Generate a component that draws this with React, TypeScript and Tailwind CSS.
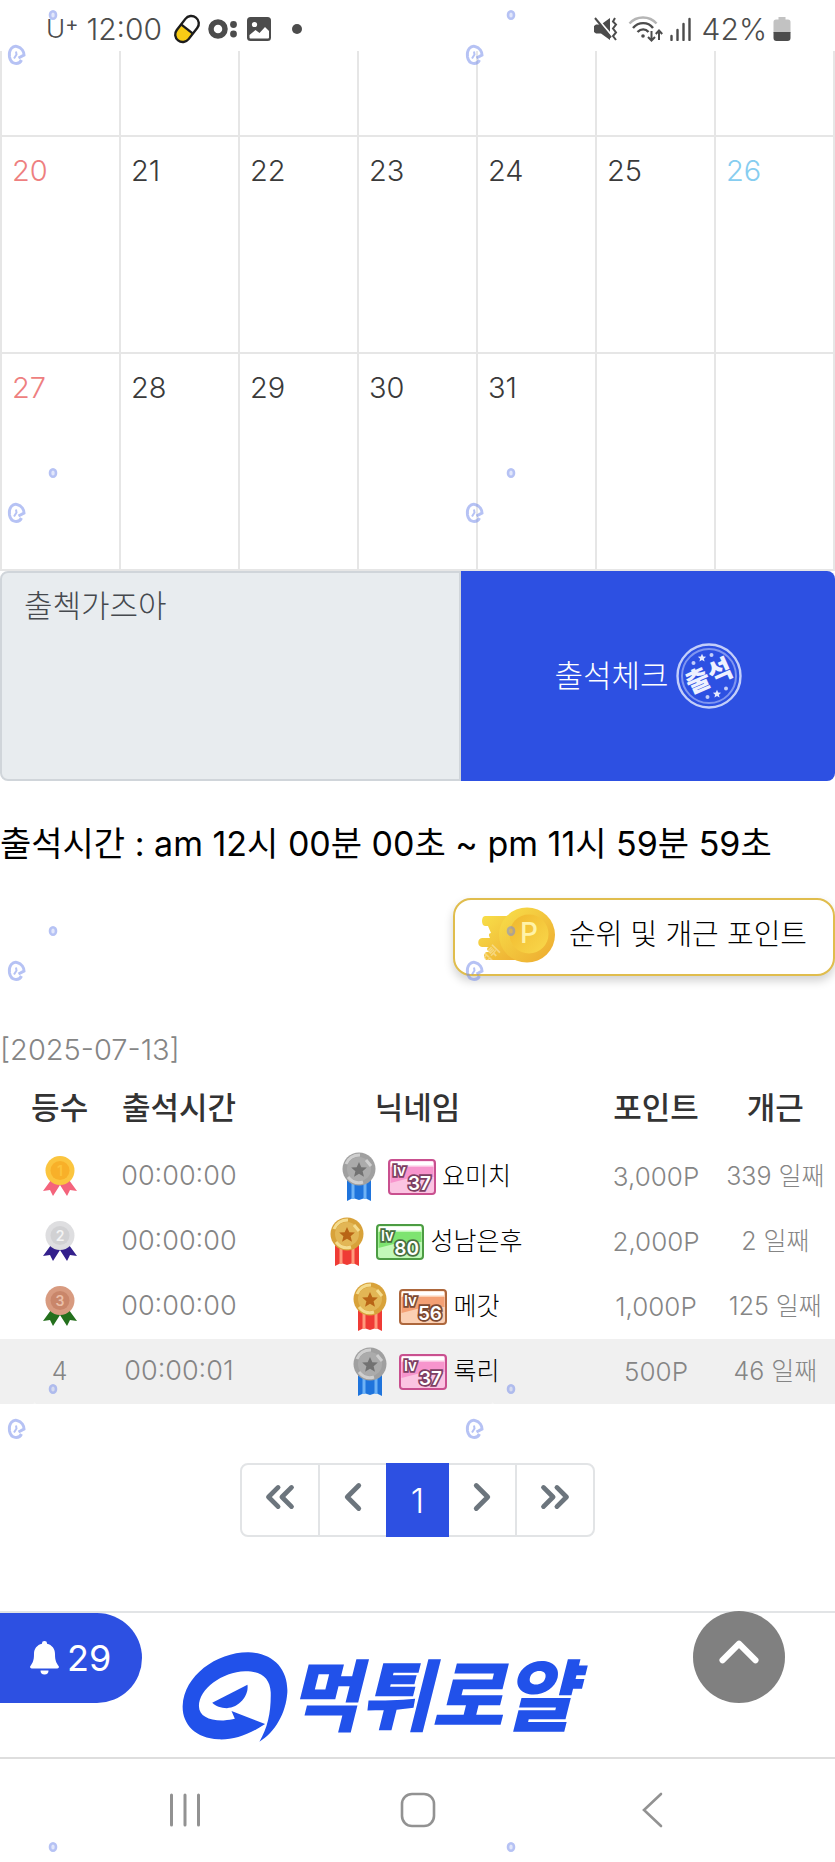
import React from "react";
import { ChevronLeft, ChevronRight, ChevronsLeft, ChevronsRight, ChevronUp } from "lucide-react";

type Tier = "gold" | "silver";
type BadgeTone = "pink" | "green" | "orange";

interface Entry {
  rank: number;
  time: string;
  tier: Tier;
  tone: BadgeTone;
  level: number;
  name: string;
  points: string;
  streak: string;
}

const entries: Entry[] = [
  { rank: 1, time: "00:00:00", tier: "silver", tone: "pink", level: 37, name: "요미치", points: "3,000P", streak: "339 일째" },
  { rank: 2, time: "00:00:00", tier: "gold", tone: "green", level: 80, name: "성남은후", points: "2,000P", streak: "2 일째" },
  { rank: 3, time: "00:00:00", tier: "gold", tone: "orange", level: 56, name: "메갓", points: "1,000P", streak: "125 일째" },
  { rank: 4, time: "00:00:01", tier: "silver", tone: "pink", level: 37, name: "록리", points: "500P", streak: "46 일째" },
];

const weeks: (number | null)[][] = [
  [20, 21, 22, 23, 24, 25, 26],
  [27, 28, 29, 30, 31, null, null],
];

const dayColors = [
  "text-[#ee7f80]",
  "text-[#3a3a3a]",
  "text-[#3a3a3a]",
  "text-[#3a3a3a]",
  "text-[#3a3a3a]",
  "text-[#3a3a3a]",
  "text-[#86cdf0]",
];

function StatusBar() {
  return (
    <header className="flex h-[51px] items-center justify-between bg-white pt-[6px] pr-[44px] pl-[46px] text-[30px] leading-none text-[#4c4c4c]">
      <div className="flex items-center">
        <span className="flex items-start">
          <span className="text-[26px] font-light">U</span>
          <span className="text-[20px] leading-[16px]">+</span>
        </span>
        <span className="ml-[8px] font-light">12:00</span>
        <svg className="ml-[10px] h-[30px] w-[30px]" viewBox="0 0 30 30" aria-hidden="true">
          <g transform="rotate(38 15 15)">
            <path d="M7.5 15V8a7.500 7.500 0 0 1 15 0v7z" fill="#fff" />
            <path d="M7.500 15v7a7.500 7.500 0 0 0 15 0v-7z" fill="#f7cb15" />
            <rect x="7.5" y="0.500" width="15" height="29" rx="7.500" fill="none" stroke="#1c1c1c" strokeWidth="2.400" />
            <path d="M7.500 15h15" stroke="#1c1c1c" strokeWidth="2.400" />
          </g>
        </svg>
        <svg className="ml-[6px] h-[24px] w-[30px]" viewBox="0 0 30 24" aria-hidden="true">
          <circle cx="10" cy="12" r="7" fill="none" stroke="#4c4c4c" strokeWidth="5.500" />
          <circle cx="25.500" cy="7.500" r="3.400" fill="#4c4c4c" />
          <circle cx="25.500" cy="17" r="3.400" fill="#4c4c4c" />
        </svg>
        <svg className="ml-[9px] h-[24px] w-[24px]" viewBox="0 0 24 24" aria-hidden="true">
          <rect width="24" height="24" rx="3.500" fill="#4c4c4c" />
          <circle cx="7.500" cy="7.500" r="2.600" fill="#fff" />
          <path d="M2.500 18l6-5 4 3 5.500-6 4 4v6.500a1 1 0 0 1-1 1H3.500a1 1 0 0 1-1-1z" fill="#fff" />
        </svg>
        <span className="ml-[21px] h-[10px] w-[10px] rounded-full bg-[#4c4c4c]" />
      </div>
      <div className="flex items-center">
        <svg className="h-[24px] w-[24px]" viewBox="0 0 24 24" aria-hidden="true">
          <path d="M0 9l2-1.500h5L16 1v22l-9-6.500H2L0 15z" fill="#4c4c4c" />
          <path d="M2 0l17 20" stroke="#fff" strokeWidth="2" />
          <path d="M1 1l16 19.500" stroke="#4c4c4c" strokeWidth="2" />
          <path d="M21 1l-2 3.500 3 3-3 4 3 4-3 3.500 3 4" fill="none" stroke="#4c4c4c" strokeWidth="2" />
        </svg>
        <svg className="ml-[10px] h-[26px] w-[35px]" viewBox="0 0 35 26" aria-hidden="true">
          <path d="M1.500 7.500c7-8 20-8 27 0" fill="none" stroke="#b5b5b5" strokeWidth="2.400" />
          <path d="M5 12c5.500-6.500 15-6.500 20 0" fill="none" stroke="#4c4c4c" strokeWidth="2.400" />
          <path d="M9.500 16c3.500-3.500 8-3.500 11 0" fill="none" stroke="#4c4c4c" strokeWidth="2.400" />
          <circle cx="15" cy="20" r="1.800" fill="#4c4c4c" />
          <path d="M23.500 15v9M20 21l3.500 3.500L27 21M31 24v-9M27.800 18l3.200-3.500 3.200 3.500" fill="none" stroke="#4c4c4c" strokeWidth="2" />
        </svg>
        <svg className="ml-[7px] h-[24px] w-[21px]" viewBox="0 0 21 24" aria-hidden="true">
          <path d="M1.500 19v4M7.500 13v10M13.500 7v16M19.500 2v21" stroke="#4c4c4c" strokeWidth="2.400" strokeLinecap="round" />
        </svg>
        <span className="ml-[11px] font-light">42%</span>
        <svg className="ml-[6px] h-[24px] w-[18px]" viewBox="0 0 18 24" aria-hidden="true">
          <path d="M5.500 0h7v2.500H15a2.500 2.500 0 0 1 2.500 2.500V16h-17V5A2.500 2.500 0 0 1 3 2.500h2.500z" fill="#c2c2c2" />
          <path d="M.5 15h17v6a3 3 0 0 1-3 3h-11a3 3 0 0 1-3-3z" fill="#4c4c4c" />
        </svg>
      </div>
    </header>
  );
}

function Calendar() {
  return (
    <table className="w-full table-fixed border-collapse" aria-label="출석 달력">
      <tbody>
        <tr className="h-[85px]">
          {dayColors.map((_, i) => (
            <td key={i} className="border-2 border-t-0 border-[#e6e6e6]" />
          ))}
        </tr>
        {weeks.map((week, w) => (
          <tr key={w} className="h-[217px]">
            {week.map((day, i) => (
              <td key={i} className={`border-2 border-[#e6e6e6] px-[10px] pt-[15px] align-top text-[29px] leading-[38px] font-light ${dayColors[i]}`}>
                {day}
              </td>
            ))}
          </tr>
        ))}
      </tbody>
    </table>
  );
}

function Star({ x, y, s, fill }: { x: number; y: number; s: number; fill: string }) {
  return (
    <path
      transform={`translate(${x} ${y}) scale(${s})`}
      d="M0-10L2.900-3.500 9.800-3 4.500 1.500 6.200 8.500 0 4.700-6.200 8.500-4.500 1.500-9.800-3-2.900-3.500z"
      fill={fill}
    />
  );
}

function Stamp() {
  return (
    <svg className="h-[66px] w-[66px]" viewBox="0 0 66 66" aria-hidden="true">
      <circle cx="33" cy="33" r="31.500" fill="none" stroke="#c3cefa" strokeWidth="2.400" />
      <circle cx="33" cy="33" r="27" fill="none" stroke="#7f95f0" strokeWidth="2" />
      <Star x={26} y={15} s={0.42} fill="#e6ebff" />
      <Star x={41} y={51} s={0.42} fill="#e6ebff" />
      <circle cx="17.500" cy="20" r="2" fill="#c3cefa" />
      <circle cx="35.500" cy="12" r="2" fill="#c3cefa" />
      <circle cx="31.500" cy="54" r="2" fill="#c3cefa" />
      <circle cx="50" cy="45.500" r="2" fill="#c3cefa" />
      <text x="33" y="42" textAnchor="middle" transform="rotate(-24 33 33)" fontSize="26" fontWeight="900" fill="#eef1ff">
        출석
      </text>
    </svg>
  );
}

function CheckForm() {
  return (
    <form className="flex h-[210px]" onSubmit={(e) => e.preventDefault()}>
      <textarea
        aria-label="출석 한마디"
        readOnly
        defaultValue="출첵가즈아"
        className="w-[461px] max-w-[60%] resize-none rounded-l-[8px] border-2 border-[#d0d5da] bg-[#e8ecef] px-[22px] py-[11px] text-[31px] leading-[44px] font-light text-[#45494e] outline-none"
      />
      <button type="submit" className="flex flex-1 items-center justify-center gap-[7px] rounded-r-[8px] bg-[#2d50e2] text-[31px] font-light text-white">
        출석체크
        <Stamp />
      </button>
    </form>
  );
}

function Coin() {
  return (
    <svg className="h-[58px] w-[80px]" viewBox="0 0 80 58" aria-hidden="true">
      <defs>
        <linearGradient id="coin" x1="0" y1="0" x2="1" y2="1">
          <stop offset="0" stopColor="#f8e04a" />
          <stop offset="1" stopColor="#eda92f" />
        </linearGradient>
        <linearGradient id="coinFace" x1="0" y1="0" x2="1" y2="1">
          <stop offset="0" stopColor="#f0b62c" />
          <stop offset="1" stopColor="#f9d94c" />
        </linearGradient>
      </defs>
      <path d="M8 10h44v44H10c-4 0-4-8 0-8h2c-3-2-2-5 0-5H5c-5 0-5-9 0-9h8c-2-3-1-5 1-5l-3-7H8c-4 0-4-10 0-10z" fill="url(#coin)" />
      <ellipse cx="50" cy="29" rx="28" ry="27.500" fill="url(#coin)" />
      <circle cx="52" cy="28" r="19.500" fill="url(#coinFace)" />
      <text x="52" y="37" textAnchor="middle" fontSize="28" fontWeight="500" fill="#fff3a8">
        P
      </text>
    </svg>
  );
}

const rankColors: Record<number, { disc: string; inner: string; ribbon: string; digit: string }> = {
  1: { disc: "#fbc53f", inner: "#f7a823", ribbon: "#f4647c", digit: "#fcc33c" },
  2: { disc: "#dedee0", inner: "#cccccf", ribbon: "#33208c", digit: "#f4f4f4" },
  3: { disc: "#d89b80", inner: "#c47f63", ribbon: "#24701d", digit: "#eabfa8" },
};

function RankMedal({ rank }: { rank: number }) {
  const c = rankColors[rank];
  return (
    <svg className="mx-auto h-[44px] w-[36px]" viewBox="0 0 36 44" role="img" aria-label={`${rank}등`}>
      <path d="M9 25L1 36l7-1 3 6 7-11 7 11 3-6 7 1-8-11z" fill={c.ribbon} />
      <circle cx="18" cy="15.500" r="14.500" fill={c.disc} />
      <circle cx="18" cy="15.500" r="9.500" fill={c.inner} opacity="0.75" />
      <text x="18" y="20.500" textAnchor="middle" fontSize="14" fontWeight="600" fill={c.digit}>
        {rank}
      </text>
    </svg>
  );
}

function TierMedal({ tier }: { tier: Tier }) {
  const gold = tier === "gold";
  return (
    <svg className="h-[50px] w-[34px]" viewBox="0 0 34 50" aria-hidden="true">
      <path d="M5 26h24v23l-6-3-6 2-6-2-6 3z" fill={gold ? "#ef3b35" : "#1f74dc"} />
      <path d="M11 30v17M23 30v17" stroke={gold ? "#ff9a7c" : "#6eb2f5"} strokeWidth="3" />
      <circle cx="17" cy="17" r="16.500" fill={gold ? "#d8a23a" : "#a0a0a0"} />
      <circle cx="17" cy="17" r="12" fill={gold ? "#e2b655" : "#ababab"} />
      <path d="M4 12c3-7 9-9 14-9M6 25c4 5 9 7 15 5M24 8l5 6" fill="none" stroke={gold ? "#f4dc8e" : "#cfcfcf"} strokeWidth="3" />
      <Star x={17} y={18} s={0.8} fill={gold ? "#b96516" : "#727272"} />
    </svg>
  );
}

const tones: Record<BadgeTone, { edge: string; top: string; bottom: string; ink: string }> = {
  pink: { edge: "#c9508f", top: "#f795cd", bottom: "#fbc4e2", ink: "#7d3f62" },
  green: { edge: "#4c9c43", top: "#7ee470", bottom: "#c2f9b8", ink: "#48703f" },
  orange: { edge: "#ad673c", top: "#f4a074", bottom: "#fbd0b4", ink: "#7d4a32" },
};

function LevelBadge({ tone, level }: { tone: BadgeTone; level: number }) {
  const t = tones[tone];
  return (
    <svg className="h-[36px] w-[48px]" viewBox="0 0 48 36" role="img" aria-label={`레벨 ${level}`}>
      <rect x="1" y="1" width="46" height="34" rx="3" fill={t.bottom} stroke={t.edge} strokeWidth="2" />
      <path d="M2.500 8h43v10h-20l-23 6z" fill={t.top} />
      <path d="M3 4.500h42" stroke="#fff" strokeWidth="4" />
      <g fill="#fff" stroke={t.ink} strokeWidth="3.500" paintOrder="stroke" fontWeight="600">
        <text x="5" y="17" fontSize="15">lv</text>
        <text x="43" y="31" textAnchor="end" fontSize="19">{level}</text>
      </g>
    </svg>
  );
}

function Ranking() {
  return (
    <table className="w-full table-fixed text-center text-[25px] font-light text-[#858585]">
      <colgroup>
        <col className="w-1/7" />
        <col className="w-1/7" />
        <col className="w-3/7" />
        <col className="w-1/7" />
        <col className="w-1/7" />
      </colgroup>
      <thead>
        <tr className="h-[72px] text-[31px] text-[#333]">
          {["등수", "출석시간", "닉네임", "포인트", "개근"].map((h) => (
            <th key={h} scope="col" className="font-medium whitespace-nowrap">{h}</th>
          ))}
        </tr>
      </thead>
      <tbody>
        {entries.map((e) => (
          <tr key={e.rank} className="h-[65px] whitespace-nowrap last:bg-[#f0f0f0]">
            <td>{e.rank < 4 ? <RankMedal rank={e.rank} /> : e.rank}</td>
            <td className="text-[27px]">{e.time}</td>
            <td>
              <span className="flex items-center justify-center pl-[18px]">
                <TierMedal tier={e.tier} />
                <span className="ml-[12px]"><LevelBadge tone={e.tone} level={e.level} /></span>
                <span className="ml-[6px] text-black">{e.name}</span>
              </span>
            </td>
            <td className="text-[26px]">{e.points}</td>
            <td>{e.streak}</td>
          </tr>
        ))}
      </tbody>
    </table>
  );
}

function Pagination() {
  const cell = "flex items-center justify-center border-[#e2e4e6] text-[#6c757d]";
  return (
    <nav aria-label="페이지" className="mx-auto flex h-[74px] w-[355px]">
      <button type="button" aria-label="처음" className={`${cell} w-[80px] rounded-l-[8px] border-2 pb-[6px]`}>
        <ChevronsLeft size={46} strokeWidth={2.500} />
      </button>
      <button type="button" aria-label="이전" className={`${cell} w-[66px] border-y-2 pb-[6px]`}>
        <ChevronLeft size={46} strokeWidth={2.500} />
      </button>
      <button type="button" aria-current="page" className="w-[63px] bg-[#2d50e2] text-[34px] font-light text-white">
        1
      </button>
      <button type="button" aria-label="다음" className={`${cell} w-[66px] border-y-2 pb-[6px]`}>
        <ChevronRight size={46} strokeWidth={2.500} />
      </button>
      <button type="button" aria-label="마지막" className={`${cell} w-[80px] rounded-r-[8px] border-2 pb-[6px]`}>
        <ChevronsRight size={46} strokeWidth={2.500} />
      </button>
    </nav>
  );
}

function Footer() {
  return (
    <footer className="relative flex h-[148px] items-center border-t-2 border-b-2 border-t-[#e2e4e6] border-b-[#dedede] pt-[24px] pl-[182px]">
      <button type="button" aria-label="알림 29개" className="absolute top-0 left-0 flex h-[90px] w-[142px] items-center gap-[8px] rounded-r-full bg-[#2d50e2] pl-[30px] text-[36px] text-white">
        <svg className="h-[34px] w-[29px]" viewBox="0 0 29 34" aria-hidden="true">
          <path d="M14.500 0a2.500 2.500 0 0 1 2.500 2.800c5 1.200 8 5 8 10.200 0 7 1.500 9 3.600 12 .8 1.500 0 2.500-1.300 2.500H1.700C.4 27.500-.4 26.500.4 25 2.500 22 4 20 4 13c0-5.200 3-9 8-10.200A2.500 2.500 0 0 1 14.500 0z" fill="#fff" />
          <path d="M10.500 29.500h8a4 4 0 0 1-8 0z" fill="#fff" />
        </svg>
        29
      </button>
      <a href="#home" className="flex items-center text-[#2151ea]">
        <svg className="h-[92px] w-[106px]" viewBox="545 186 319 275" aria-hidden="true">
          <path
            d="M795 405C745 438 700 453 655 451C585 448 545 405 547 350C550 260 650 188 745 189C820 190 865 240 862 310C858 372 825 430 778 458C803 415 813 370 812 310C810 268 785 246 735 246C665 248 595 300 596 352C597 380 625 395 670 394C685 393 695 391 704 389L694 366Z"
            fill="currentColor"
          />
          <path d="M636 341L742 287C747 320 715 357 680 357C662 357 646 351 636 341Z" fill="currentColor" />
        </svg>
        <span className="text-[78px] leading-[90px] font-black whitespace-nowrap italic">먹튀로얄</span>
      </a>
      <button type="button" aria-label="맨 위로" className="absolute -top-[2px] right-[50px] flex h-[92px] w-[92px] items-center justify-center rounded-full bg-[#808080] pb-[10px] text-white">
        <ChevronUp size={66} strokeWidth={2.200} />
      </button>
    </footer>
  );
}

function SystemNav() {
  return (
    <nav aria-label="시스템" className="flex h-[102px] items-center justify-center gap-[198px] text-[#929292]">
      <button type="button" aria-label="최근 앱">
        <svg className="h-[34px] w-[34px]" viewBox="0 0 34 34" aria-hidden="true">
          <path d="M3.500 2v30M17 2v30M30.500 2v30" stroke="currentColor" strokeWidth="3" strokeLinecap="round" />
        </svg>
      </button>
      <button type="button" aria-label="홈">
        <svg className="h-[36px] w-[36px]" viewBox="0 0 36 36" aria-hidden="true">
          <rect x="2" y="2" width="32" height="32" rx="10" fill="none" stroke="currentColor" strokeWidth="2.600" />
        </svg>
      </button>
      <button type="button" aria-label="뒤로">
        <svg className="h-[36px] w-[34px]" viewBox="0 0 34 36" aria-hidden="true">
          <path d="M27 2L10 18l17 16" fill="none" stroke="currentColor" strokeWidth="2.600" strokeLinecap="round" />
        </svg>
      </button>
    </nav>
  );
}

function Watermark() {
  return (
    <svg className="pointer-events-none absolute inset-0 h-full w-full" aria-hidden="true">
      <defs>
        <pattern id="mark" width="458" height="458" patternUnits="userSpaceOnUse">
          <g fill="none" stroke="#6d86ea" opacity="0.5">
            <path d="M21.500 60C19 65 11 65 9.500 57C8.500 49 13 45.500 17 46.500C22 47.500 24 52 24 55L18.500 58" strokeWidth="3" />
            <path d="M16 51.500l.5 3-2.500 4" strokeWidth="2" />
            <ellipse cx="53" cy="15" rx="3" ry="3.800" strokeWidth="2.600" fill="#6d86ea" fillOpacity="0.4" />
          </g>
          <text x="27" y="50" transform="rotate(-45 27 50)" fontSize="12" fontWeight="700" fill="#fff" opacity="0.35">
            먹튀
          </text>
        </pattern>
      </defs>
      <rect width="100%" height="100%" fill="url(#mark)" />
    </svg>
  );
}

export default function App() {
  return (
    <div className="relative overflow-hidden bg-white font-['Inter','Noto_Sans_CJK_KR',sans-serif]">
      <StatusBar />
      <main>
        <Calendar />
        <CheckForm />
        <p className="mt-[39px] text-[34px] leading-[48px] whitespace-nowrap text-black">
          출석시간 : am 12시 00분 00초 ~ pm 11시 59분 59초
        </p>
        <div className="mt-[30px] flex justify-end">
          <button type="button" className="flex h-[78px] items-center gap-[12px] rounded-[18px] border-2 border-[#e0bd4d] bg-white pr-[26px] pl-[22px] pb-[5px] text-[29px] font-light whitespace-nowrap text-black shadow-[0_5px_10px_rgba(0,0,0,0.18)]">
            <Coin />
            순위 및 개근 포인트
          </button>
        </div>
        <p className="mt-[52px] text-[29px] leading-[44px] font-light text-[#858585]">[2025-07-13]</p>
        <Ranking />
        <div className="pt-[59px] pb-[74px]">
          <Pagination />
        </div>
      </main>
      <Footer />
      <SystemNav />
      <Watermark />
    </div>
  );
}
